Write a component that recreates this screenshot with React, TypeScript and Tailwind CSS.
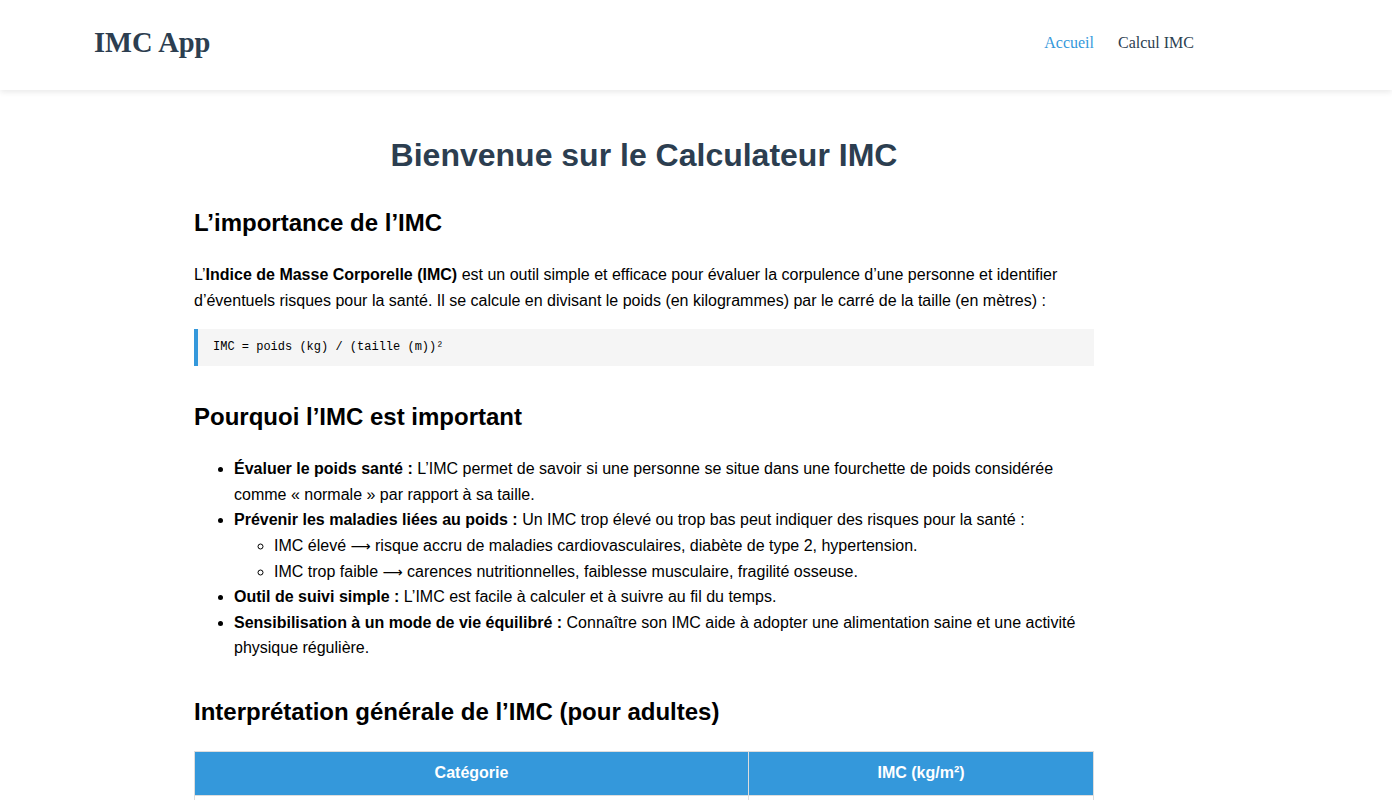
import React from "react";

export default function App() {
  const rows = [
    ["Maigreur", "< 18,5"],
    ["Poids normal", "18,5 – 24,9"],
    ["Surpoids", "25 – 29,9"],
    ["Obésité", "≥ 30"],
  ];
  const arrow = (
    <span className="inline-block align-baseline text-[14px] leading-[0]" style={{ fontFamily: '"DejaVu Sans", sans-serif' }}>
      ⟶
    </span>
  );
  return (
    <div className="min-h-screen bg-white text-black" style={{ fontFamily: '"Liberation Sans", Arial, sans-serif' }}>
      <header className="h-[90px] bg-white shadow-[0_2px_6px_rgba(0,0,0,0.09)]">
        <div className="w-[1288px]">
          <div className="mx-auto flex h-[90px] max-w-[1100px] items-center justify-between" style={{ fontFamily: '"Liberation Serif", "Times New Roman", serif' }}>
            <div className="text-[28.5px] font-bold leading-none text-[#2c3e50] -mt-[4px]">IMC App</div>
            <nav className="flex items-center gap-[24px] text-[16px] -mt-[4px]">
              <a className="text-[#3498db]">Accueil</a>
              <a className="text-[#2c3e50]">Calcul IMC</a>
            </nav>
          </div>
        </div>
      </header>
      <div className="w-[1288px]">
        <main className="mx-auto max-w-[900px] pt-[46px] pb-10">
          <h1 className="text-center text-[32px] font-bold leading-[38px] text-[#2c3e50]">Bienvenue sur le Calculateur IMC</h1>

          <h2 className="mt-[34px] text-[24px] font-bold leading-[29px]">L’importance de l’IMC</h2>
          <p className="mt-[25px] text-[16px] leading-[25.6px]">
            L’<strong>Indice de Masse Corporelle (IMC)</strong> est un outil simple et efficace pour évaluer la corpulence d’une personne et identifier d’éventuels risques pour la santé. Il se calcule en divisant le poids (en kilogrammes) par le carré de la taille (en mètres) :
          </p>
          <div className="mt-[16px] border-l-4 border-[#3498db] bg-[#f5f5f5] py-[10px] pl-[15px] text-[12px] leading-[17px]" style={{ fontFamily: '"Liberation Mono", "DejaVu Sans Mono", monospace' }}>
            IMC = poids (kg) / (taille (m))²
          </div>

          <h2 className="mt-[36px] text-[24px] font-bold leading-[29px]">Pourquoi l’IMC est important</h2>
          <ul className="mt-[25px] list-disc pl-[40px] text-[16px] leading-[25.6px]">
            <li>
              <strong>Évaluer le poids santé :</strong> L’IMC permet de savoir si une personne se situe dans une fourchette de poids considérée comme « normale » par rapport à sa taille.
            </li>
            <li>
              <strong>Prévenir les maladies liées au poids :</strong> Un IMC trop élevé ou trop bas peut indiquer des risques pour la santé :
              <ul className="list-[circle] pl-[40px]">
                <li>IMC élevé {arrow} risque accru de maladies cardiovasculaires, diabète de type 2, hypertension.</li>
                <li>IMC trop faible {arrow} carences nutritionnelles, faiblesse musculaire, fragilité osseuse.</li>
              </ul>
            </li>
            <li>
              <strong>Outil de suivi simple :</strong> L’IMC est facile à calculer et à suivre au fil du temps.
            </li>
            <li>
              <strong>Sensibilisation à un mode de vie équilibré :</strong> Connaître son IMC aide à adopter une alimentation saine et une activité physique régulière.
            </li>
          </ul>

          <h2 className="mt-[36px] text-[24px] font-bold leading-[29px]">Interprétation générale de l’IMC (pour adultes)</h2>
          <table className="mt-[25px] w-full border-collapse text-[16px]">
            <thead>
              <tr className="bg-[#3498db] text-white">
                <th className="h-[44px] w-[554px] border border-[#ddd] font-bold">Catégorie</th>
                <th className="h-[44px] border border-[#ddd] font-bold">IMC (kg/m²)</th>
              </tr>
            </thead>
            <tbody>
              {rows.map((r) => (
                <tr key={r[0]}>
                  <td className="h-[44px] border border-[#ddd] text-center">{r[0]}</td>
                  <td className="h-[44px] border border-[#ddd] text-center">{r[1]}</td>
                </tr>
              ))}
            </tbody>
          </table>
        </main>
      </div>
    </div>
  );
}
